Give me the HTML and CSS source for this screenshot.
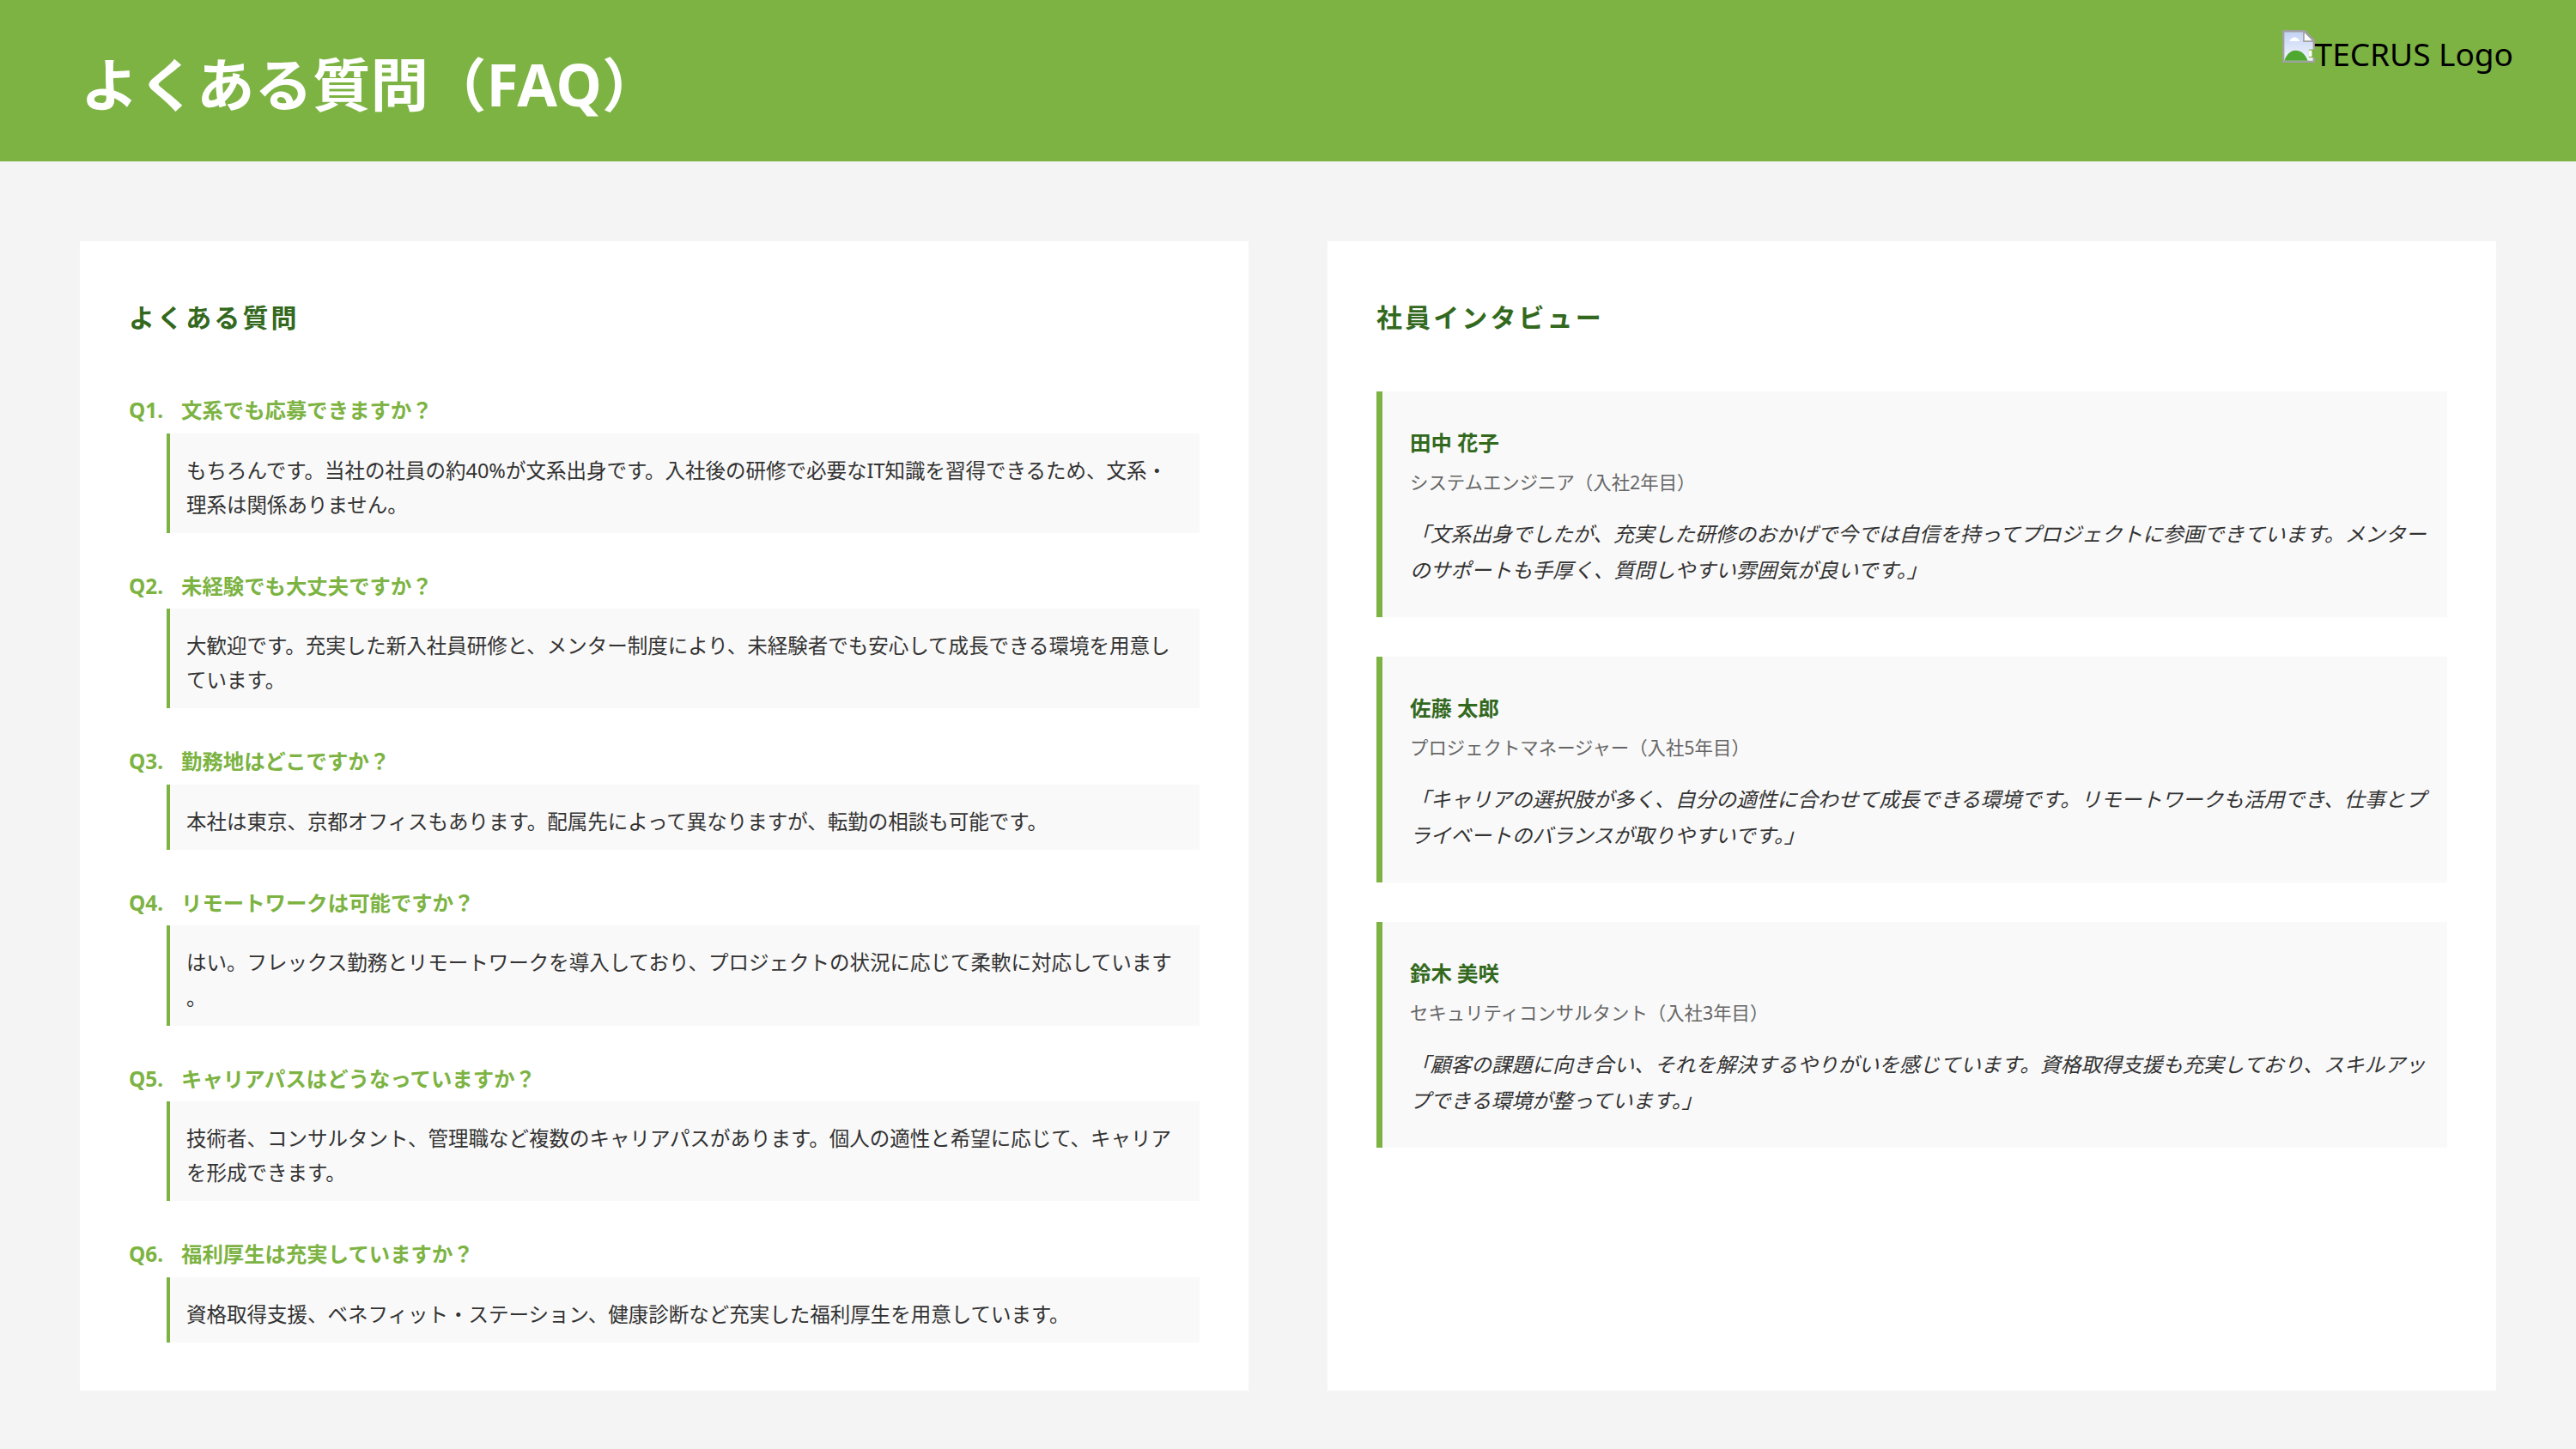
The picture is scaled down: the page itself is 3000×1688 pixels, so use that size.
FILE: index.html
```html
<!DOCTYPE html>
<html lang="ja">
<head>
<meta charset="utf-8">
<title>よくある質問（FAQ）</title>
<link rel="stylesheet" href="styles.css">
</head>
<body>
<header class="header">
  <h1 class="title">よくある質問（FAQ）</h1>
  <div class="logo">
    <svg class="broken" viewBox="0 0 16 16" aria-hidden="true">
      <defs>
        <linearGradient id="sky" x1="0" y1="0" x2="0" y2="1">
          <stop offset="0" stop-color="#c3d2f4"/>
          <stop offset="1" stop-color="#f2f5fc"/>
        </linearGradient>
      </defs>
      <path d="M.5.5h10.500l4.500 4.500v10.500h-15z" fill="url(#sky)" stroke="#a0a0a0"/>
      <path d="M1 15c1-3 3-5 5.500-5s4.500 1.500 6 5z" fill="#4fa82f"/>
      <path d="M3.500 5.500c.5-1 1.500-2 2.500-2s2 1 2.500 2z" fill="#fff"/>
      <path d="M13 9.500h3v4h-3z" fill="#7cb342"/>
      <path d="M13 10h1.500v3h-1.500z" fill="#fff"/>
      <path d="M10.500.5v5h5z" fill="#fff" stroke="#a0a0a0" stroke-width=".7"/>
    </svg><span class="logo-text">TECRUS Logo</span>
  </div>
</header>
<main class="content">
  <section class="card">
    <h2 class="card-title">よくある質問</h2>
    <div class="faq-list">
      <div class="faq">
        <h3 class="q"><span class="qn">Q1.</span>文系でも応募できますか？</h3>
        <p class="a">もちろんです。当社の社員の約40%が文系出身です。入社後の研修で必要なIT知識を習得できるため、文系・理系は関係ありません。</p>
      </div>
      <div class="faq">
        <h3 class="q"><span class="qn">Q2.</span>未経験でも大丈夫ですか？</h3>
        <p class="a">大歓迎です。充実した新入社員研修と、メンター制度により、未経験者でも安心して成長できる環境を用意しています。</p>
      </div>
      <div class="faq">
        <h3 class="q"><span class="qn">Q3.</span>勤務地はどこですか？</h3>
        <p class="a">本社は東京、京都オフィスもあります。配属先によって異なりますが、転勤の相談も可能です。</p>
      </div>
      <div class="faq">
        <h3 class="q"><span class="qn">Q4.</span>リモートワークは可能ですか？</h3>
        <p class="a">はい。フレックス勤務とリモートワークを導入しており、プロジェクトの状況に応じて柔軟に対応しています<br>。</p>
      </div>
      <div class="faq">
        <h3 class="q"><span class="qn">Q5.</span>キャリアパスはどうなっていますか？</h3>
        <p class="a">技術者、コンサルタント、管理職など複数のキャリアパスがあります。個人の適性と希望に応じて、キャリアを形成できます。</p>
      </div>
      <div class="faq">
        <h3 class="q"><span class="qn">Q6.</span>福利厚生は充実していますか？</h3>
        <p class="a">資格取得支援、ベネフィット・ステーション、健康診断など充実した福利厚生を用意しています。</p>
      </div>
    </div>
  </section>
  <section class="card">
    <h2 class="card-title">社員インタビュー</h2>
    <article class="voice">
      <div class="name">田中 花子</div>
      <div class="role">システムエンジニア（入社2年目）</div>
      <p class="quote">「文系出身でしたが、充実した研修のおかげで今では自信を持ってプロジェクトに参画できています。メンターのサポートも手厚く、質問しやすい雰囲気が良いです。」</p>
    </article>
    <article class="voice">
      <div class="name">佐藤 太郎</div>
      <div class="role">プロジェクトマネージャー（入社5年目）</div>
      <p class="quote">「キャリアの選択肢が多く、自分の適性に合わせて成長できる環境です。リモートワークも活用でき、仕事とプライベートのバランスが取りやすいです。」</p>
    </article>
    <article class="voice">
      <div class="name">鈴木 美咲</div>
      <div class="role">セキュリティコンサルタント（入社3年目）</div>
      <p class="quote">「顧客の課題に向き合い、それを解決するやりがいを感じています。資格取得支援も充実しており、スキルアップできる環境が整っています。」</p>
    </article>
  </section>
</main>
</body>
</html>
```
FILE: styles.css
```css
* { box-sizing: border-box; margin: 0; padding: 0; }
html, body { height: 100%; }
body {
  background: #f4f4f4;
  color: #333;
  font-family: "Noto Sans", "Noto Sans CJK JP", sans-serif;
  display: flex;
  flex-direction: column;
  width: 3000px;
  height: 1688px;
  overflow: hidden;
}
.header {
  background: #7cb342;
  height: 188px;
  padding: 0 73px 0 94px;
  display: flex;
  justify-content: space-between;
  align-items: flex-start;
  flex: none;
}
.title {
  color: #fff;
  font-size: 67.5px;
  font-weight: 700;
  line-height: 188px;
  padding-top: 4px;
}
.logo {
  margin-top: 35px;
  color: #000;
  font-size: 37px;
  display: flex;
  align-items: flex-start;
}
.logo-text { line-height: 54px; margin-top: 1px; }
.broken { width: 38px; height: 38px; flex: none; }
.content {
  flex: 1;
  display: grid;
  grid-template-columns: 1fr 1fr;
  gap: 92px;
  padding: 93px 93px 68px 93px;
}
.card {
  background: #fff;
  padding: 58px 57px 56px;
}
.card-title {
  color: #33691e;
  font-size: 30px;
  font-weight: 700;
  letter-spacing: 3.100px;
  line-height: 62px;
  margin-bottom: 55px;
}
.faq-list { padding-top: 2px; }
.faq { margin-bottom: 42px; }
.faq:last-child { margin-bottom: 0; }
.q {
  color: #7cb342;
  font-size: 24.400px;
  font-weight: 700;
  line-height: 39px;
  margin-bottom: 7.500px;
}
.qn { display: inline-block; width: 61px; }
.a {
  margin-left: 44px;
  background: #f9f9f9;
  border-left: 4px solid #7cb342;
  padding: 23px 28px 12.800px 19px;
  font-size: 23.500px;
  line-height: 40.200px;
}
.voice {
  background: #f9f9f9;
  border-left: 7px solid #7cb342;
  padding: 39px 20px 34px 32px;
  margin-bottom: 46px;
}
.name {
  color: #33691e;
  font-size: 24.400px;
  font-weight: 700;
  line-height: 42px;
  margin-bottom: 4px;
}
.role {
  color: #666;
  font-size: 21.400px;
  line-height: 42px;
  margin-bottom: 18px;
}
.quote {
  font-size: 23.750px;
  font-style: italic;
  line-height: 42px;
}
```
